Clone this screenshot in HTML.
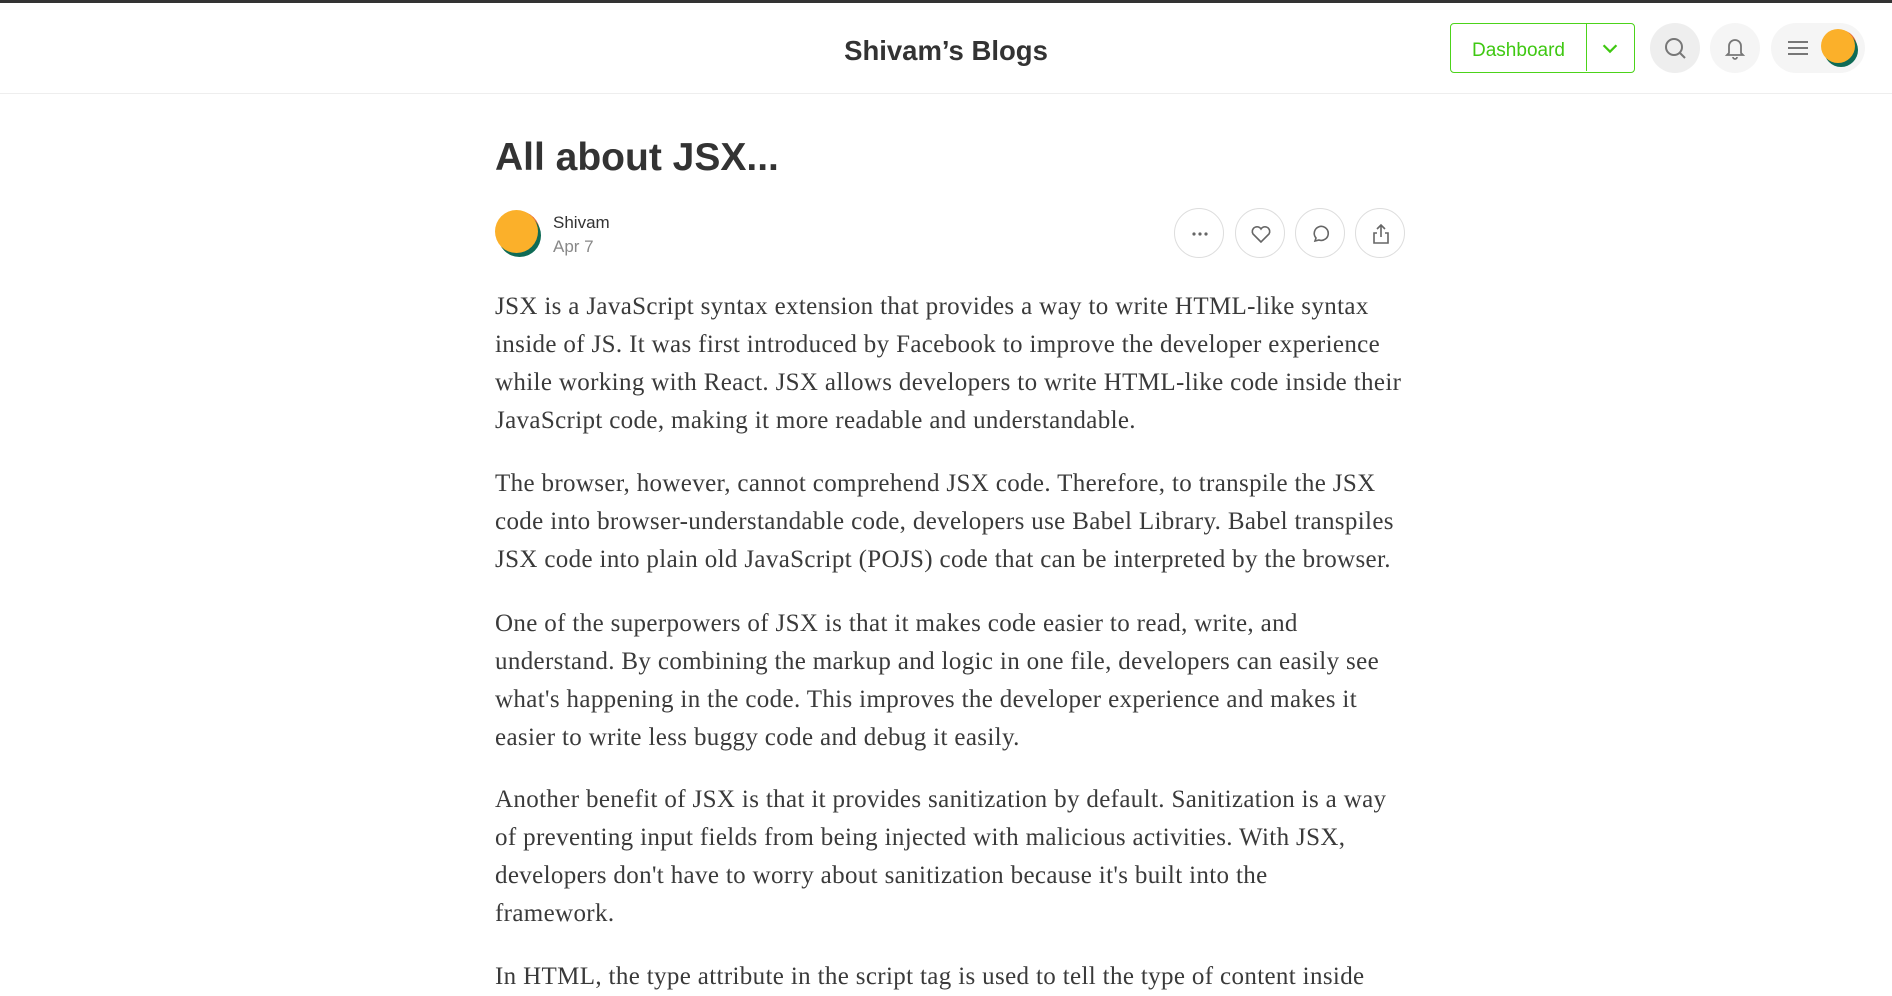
<!DOCTYPE html>
<html><head><meta charset="utf-8"><style>
*{margin:0;padding:0;box-sizing:border-box}
body{width:1892px;height:993px;overflow:hidden;background:#fff;font-family:"Liberation Sans",sans-serif;color:#333;position:relative}
.topbar{position:absolute;left:0;top:0;width:100%;height:3px;background:#333}
.header{position:absolute;left:0;top:3px;width:100%;height:91px;border-bottom:1px solid #eee}
.brand{position:absolute;left:0;width:100%;text-align:center;top:32px;font-size:27.5px;font-weight:bold;color:#333}
.dash{position:absolute;left:1450px;top:20px;width:185px;height:50px;border:1.5px solid #4cd31a;border-radius:4px;color:#3fc812;font-size:19px}
.dash .t{position:absolute;left:0;width:136px;top:0;height:47px;line-height:53px;text-align:center;border-right:1.5px solid #4cd31a}
.dash svg{position:absolute;left:148px;top:13px}
.circ{position:absolute;top:20px;width:50px;height:50px;border-radius:50%;background:#f2f2f2}
.circ svg{position:absolute;left:13px;top:13px}
.pill{position:absolute;left:1771px;top:20px;width:94px;height:50px;border-radius:25px;background:#f5f5f5}
.av{position:absolute;border-radius:50%;background:#fbb02a;box-shadow:3px 4px 0 #0f6b56,2px 1px 0 #e9683a}
.article{position:absolute;left:495px;top:0;width:920px}
h1{position:absolute;top:136px;font-size:39px;font-weight:bold;color:#333;white-space:nowrap}
.name{position:absolute;left:58px;top:213px;font-size:17px;color:#333}
.date{position:absolute;left:58px;top:237px;font-size:17px;color:#888}
.act{position:absolute;top:208px;width:50px;height:50px;border-radius:50%;border:1px solid #ddd}
.act svg{position:absolute;left:13px;top:13px}
p{position:absolute;left:0;font-family:"Liberation Serif",serif;font-size:25px;line-height:38px;color:#3a3a3a;white-space:nowrap;letter-spacing:0.35px}
</style></head><body>
<div class="topbar"></div>
<div class="header">
<div class="brand">Shivam’s Blogs</div>
<div class="dash"><div class="t">Dashboard</div><svg width="22" height="22" viewBox="0 0 24 24" fill="none" stroke="#3fc812" stroke-width="2.5"><path d="M5 9l7 7 7-7"/></svg></div>
<div class="circ" style="left:1650px;background:#eee"><svg width="24" height="24" viewBox="0 0 24 24" fill="none" stroke="#777" stroke-width="2"><circle cx="11" cy="11" r="8"/><path d="M17 17l5 5"/></svg></div>
<div class="circ" style="left:1710px;background:#f5f5f5"><svg width="24" height="24" viewBox="0 0 24 24" fill="none" stroke="#777" stroke-width="1.8"><path d="M6 17V10a6 6 0 0 1 12 0v7l2 2H4z"/><path d="M10 21a2 2 0 0 0 4 0"/></svg></div>
<div class="pill"><svg style="position:absolute;left:17px;top:15px" width="20" height="20" viewBox="0 0 20 20" stroke="#777" stroke-width="2"><path d="M0 4h20M0 10h20M0 16h20"/></svg><div class="av" style="left:50px;top:6px;width:34px;height:34px"></div></div>
</div>
<div class="article">
<h1>All about JSX...</h1>
<div class="av" style="left:0;top:210px;width:43px;height:43px"></div>
<div class="name">Shivam</div>
<div class="date">Apr 7</div>
<div class="act" style="left:679px"><svg width="24" height="24" viewBox="0 0 24 24" fill="#666"><circle cx="6" cy="12" r="1.6"/><circle cx="12" cy="12" r="1.6"/><circle cx="18" cy="12" r="1.6"/></svg></div>
<div class="act" style="left:740px"><svg width="24" height="24" viewBox="0 0 24 24" fill="none" stroke="#666" stroke-width="1.6"><path d="M12 20L4 12a4.5 4.5 0 0 1 8-5 4.5 4.5 0 0 1 8 5z"/></svg></div>
<div class="act" style="left:800px"><svg width="24" height="24" viewBox="0 0 24 24" fill="none" stroke="#666" stroke-width="1.6"><path d="M6 19l1-3a7 7 0 1 1 3 2z"/></svg></div>
<div class="act" style="left:860px"><svg width="24" height="24" viewBox="0 0 24 24" fill="none" stroke="#666" stroke-width="1.6"><path d="M12 15V3M8 7l4-4 4 4M8 11H5v10h14V11h-3"/></svg></div>
<p style="top:288px">JSX is a JavaScript syntax extension that provides a way to write HTML-like syntax<br>inside of JS. It was first introduced by Facebook to improve the developer experience<br>while working with React. JSX allows developers to write HTML-like code inside their<br>JavaScript code, making it more readable and understandable.</p>
<p style="top:465px">The browser, however, cannot comprehend JSX code. Therefore, to transpile the JSX<br>code into browser-understandable code, developers use Babel Library. Babel transpiles<br>JSX code into plain old JavaScript (POJS) code that can be interpreted by the browser.</p>
<p style="top:605px">One of the superpowers of JSX is that it makes code easier to read, write, and<br>understand. By combining the markup and logic in one file, developers can easily see<br>what's happening in the code. This improves the developer experience and makes it<br>easier to write less buggy code and debug it easily.</p>
<p style="top:781px">Another benefit of JSX is that it provides sanitization by default. Sanitization is a way<br>of preventing input fields from being injected with malicious activities. With JSX,<br>developers don't have to worry about sanitization because it's built into the<br>framework.</p>
<p style="top:958px">In HTML, the type attribute in the script tag is used to tell the type of content inside</p>
</div>
</body></html>
